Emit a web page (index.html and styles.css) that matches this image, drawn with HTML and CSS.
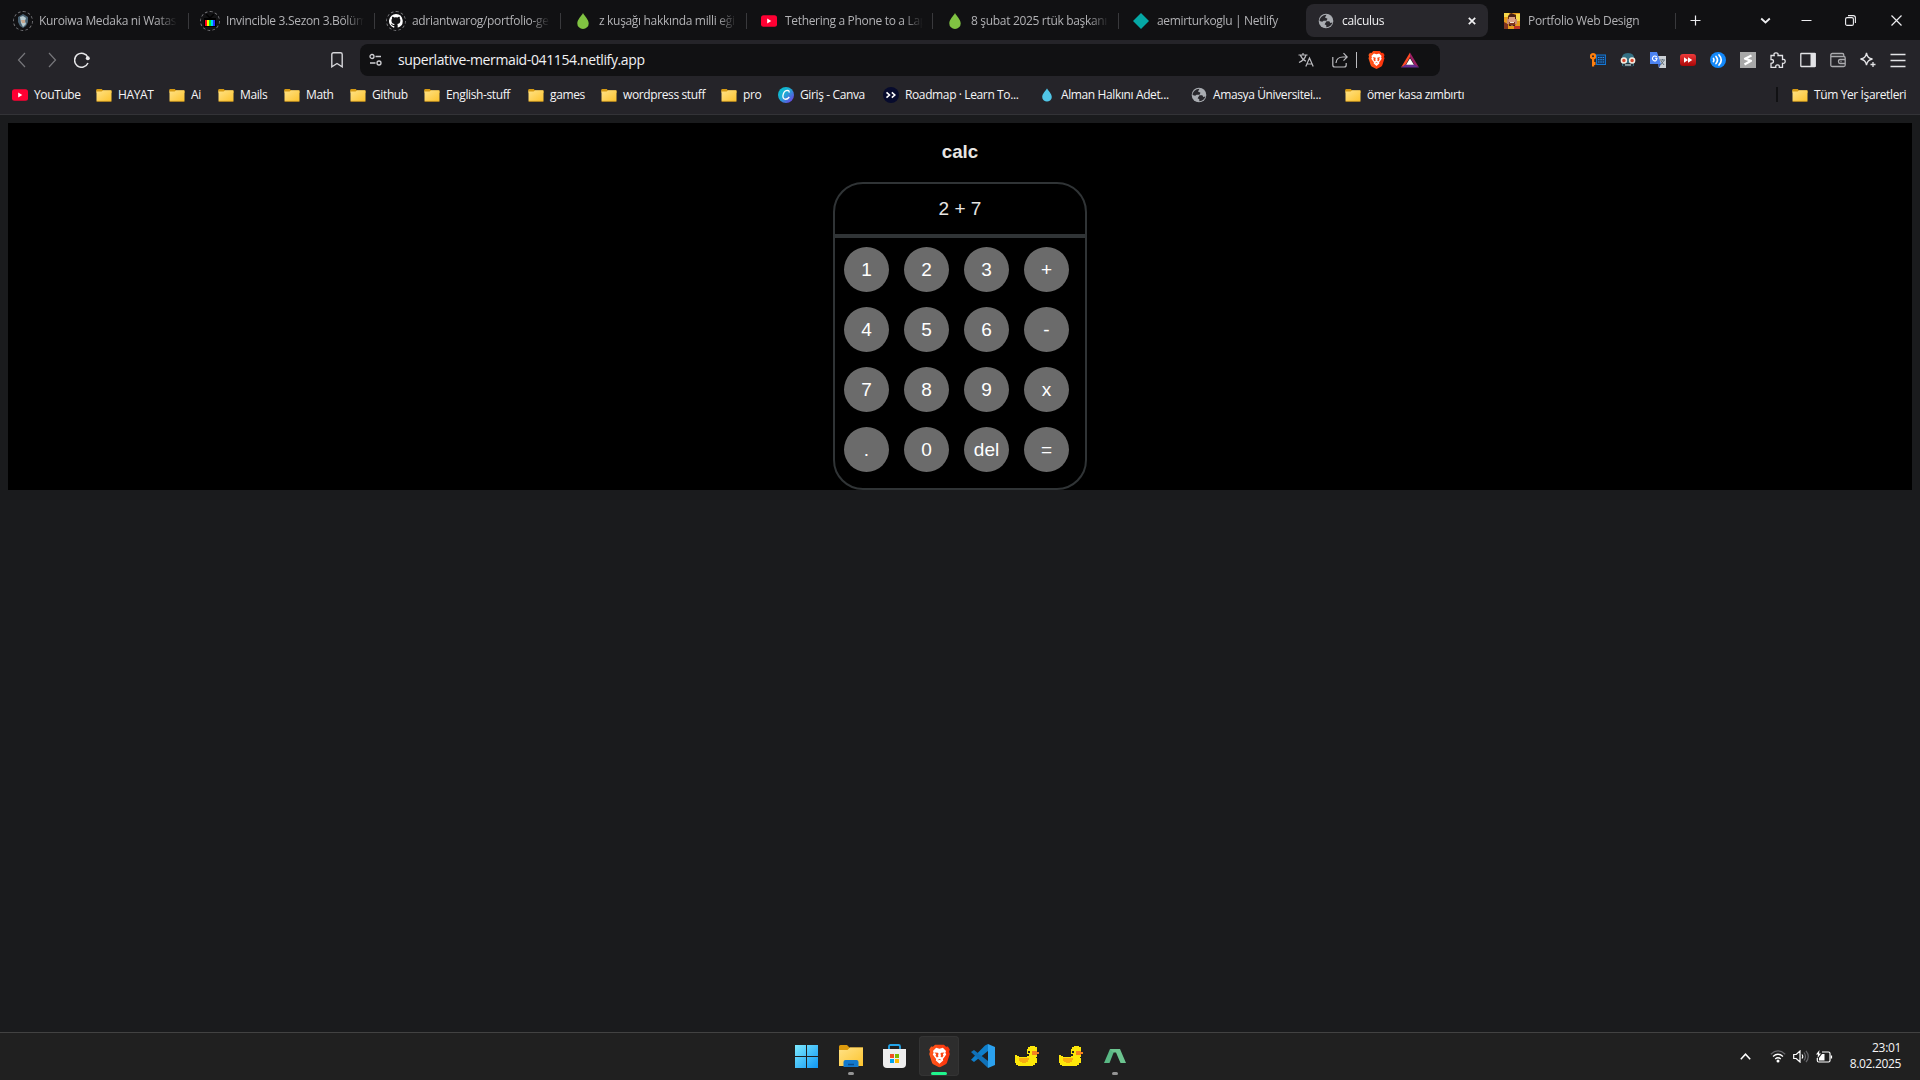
FILE: index.html
```html
<!DOCTYPE html>
<html lang="tr">
<head>
<meta charset="utf-8">
<title>calculus</title>
<link rel="stylesheet" href="styles.css">
</head>
<body>
<svg class="defs" width="0" height="0" aria-hidden="true">
  <defs>
    <linearGradient id="gFolder" x1="0" y1="0" x2="1" y2="1"><stop offset="0" stop-color="#ffe287"/><stop offset="1" stop-color="#fdc42e"/></linearGradient>
    <linearGradient id="gWin" gradientUnits="userSpaceOnUse" x1="0" y1="0" x2="23" y2="23"><stop offset="0" stop-color="#7deaff"/><stop offset="1" stop-color="#0f96f2"/></linearGradient>
    <linearGradient id="gCanva" x1="0" y1="0" x2="1" y2="1"><stop offset="0" stop-color="#00c4cc"/><stop offset=".45" stop-color="#1fa9d4"/><stop offset="1" stop-color="#7d2ae8"/></linearGradient>
    <linearGradient id="gBrave" x1="0" y1="0" x2="1" y2="0"><stop offset="0" stop-color="#ff5a1c"/><stop offset="1" stop-color="#fb2f0a"/></linearGradient>
    <linearGradient id="gRed" x1="0" y1="0" x2="0" y2="1"><stop offset="0" stop-color="#ee3a3a"/><stop offset="1" stop-color="#a90606"/></linearGradient>
    <symbol id="folder" viewBox="0 0 16 16"><path d="M.5 3q0-1 1-1h4l1.500 1.600H15.500V6H.5z" fill="#d69a13"/><rect x=".5" y="3.300" width="15" height="11" rx=".8" fill="url(#gFolder)"/><path d="M.5 3q0-1 1-1h4L7 3.500 5.500 4.500H.5z" fill="#d69a13"/><path d="M.5 14.300h15" stroke="#d9a01a" stroke-width=".8"/></symbol>
    <symbol id="youtube" viewBox="0 0 16 16"><rect y="2.300" width="16" height="11.500" rx="2.500" fill="#ff0033"/><path d="M6.200 5.600v4.800L10.300 8z" fill="#fff"/></symbol>
    <symbol id="drop" viewBox="0 0 16 16"><path d="M8 0C6.600 3 2.300 6.500 2.300 10.400a5.700 5.600 0 0 0 11.400 0C13.700 6.500 9.400 3 8 0z"/></symbol>
    <symbol id="globe" viewBox="0 0 16 16"><circle cx="8" cy="8" r="7.300" fill="#a9acb1"/><path d="M8.500 1.800 7 4.500l2.500 1.200-1 2H5.600l-1.400 1.100-2.600-.9c0-3 3-6 6.900-6.100zM8.500 8.300h2.800l1 1.700 2-.4c-.5 2.500-3 4.800-6 4.700v-2.100l-1.700-1z" fill="#28272c"/></symbol>
    <symbol id="lion" viewBox="0 0 20 22"><path d="M6 0h8l2.200 2.300 1.800-.3 1.800 2.800-.7 2.200.7 2-2.600 8.200q-.4 1.200-1.700 2L10 22l-5.500-2.800q-1.300-.8-1.700-2L.2 9l.7-2-.7-2.200L2 2l1.800.3z" fill="url(#gBrave)"/><path d="m10 4 3.200-.8 3 3-.6 1.800.8 1.600-2.200 3-1 1.200.3 1.600L10 18.300l-3.500-2.900.3-1.600-1-1.200-2.200-3L4.400 8l-.6-1.800 3-3z" fill="#fff"/><path d="m5.200 7.700 3.200.2.700.8-.5 1.800.4 1.300-1.500.7-1.300-1.700.6-1.400zM14.800 7.700l-3.200.2-.7.800.5 1.800-.4 1.300 1.500.7 1.300-1.700-.6-1.400zM7.800 15l2.200-1.200L12.200 15l-2.200-.3z" fill="#fb4816"/></symbol>
    <symbol id="duck" viewBox="0 0 24 20"><path d="M13 1h2V0h5v1h2v10h-1v1h1v5h-2v2h-2v1H3v-1H1v-2H0V9h2v1h2v1h8v-1h2V8h-2V3h1z" fill="#fde70a"/><path d="M17 5h5v1h2v2h-2v1h-5z" fill="#f6821f"/><path d="M13 5h2v2h-2z" fill="#222"/><path d="M4 12h10v2h-1v2h-2v1H7v-1H5v-1H4z" fill="#f8ad10"/></symbol>
  </defs>
</svg>

<header class="browser">
  <nav class="tabs">
    <div class="tab ringed"><span class="fav ring"><svg width="12" height="14" viewBox="0 0 12 14"><path d="M1 3 6 0l5 3v5l-2 4-3 2-3-2-2-4z" fill="#496273"/><path d="M3 3 6 2l3 2-1 3 1 3-3 3-2-4z" fill="#b9cbd0"/><path d="M4 6h4v3H5z" fill="#c7a78d"/></svg></span><span class="title">Kuroiwa Medaka ni Watash</span></div>
    <div class="tab ringed"><span class="fav ring"><svg width="14" height="14" viewBox="0 0 14 14"><path d="m3 0 4 4 4-4" stroke="#000" fill="none" stroke-width="1.500"/><rect x="1" y="4" width="12" height="9" fill="#000"/><path d="M2 6h2v6H2z" fill="#f02"/><path d="M4 6h2v6H4z" fill="#fe0"/><path d="M6 6h2v6H6z" fill="#0e3"/><path d="M8 6h2v6H8z" fill="#0cf"/><path d="M10 6h2v6h-2z" fill="#23f"/></svg></span><span class="title">Invincible 3.Sezon 3.Bölüm</span></div>
    <div class="tab ringed"><span class="fav ring"><svg width="14" height="14" viewBox="0 0 16 16"><path fill="#fff" d="M8 0a8 8 0 0 0-2.500 15.600c.4.100.5-.2.500-.4v-1.500c-2 .4-2.600-.5-2.800-1-.1-.2-.5-.9-.8-1.100-.3-.2-.7-.5 0-.6.600 0 1.100.6 1.200.8.700 1.200 1.900.9 2.300.7.100-.5.300-.9.500-1.100-1.800-.2-3.600-.9-3.600-4 0-.9.300-1.600.8-2.200-.1-.2-.4-1 .1-2.100 0 0 .7-.2 2.200.8a7.400 7.400 0 0 1 4 0c1.500-1 2.200-.8 2.200-.8.500 1.100.2 1.900.1 2.100.5.600.8 1.300.8 2.200 0 3.100-1.900 3.700-3.600 4 .3.200.5.700.5 1.500v2.200c0 .2.100.5.500.4A8 8 0 0 0 8 0"/></svg></span><span class="title">adriantwarog/portfolio-ge</span></div>
    <div class="tab"><svg class="fav green"><use href="#drop"/></svg><span class="title">z kuşağı hakkında milli eği</span></div>
    <div class="tab"><svg class="fav"><use href="#youtube"/></svg><span class="title">Tethering a Phone to a Lap</span></div>
    <div class="tab"><svg class="fav green"><use href="#drop"/></svg><span class="title">8 şubat 2025 rtük başkanı</span></div>
    <div class="tab"><svg class="fav" viewBox="0 0 16 16"><path d="m8 0 8 8-8 8-8-8z" fill="#05a8a5"/></svg><span class="title">aemirturkoglu | Netlify</span></div>
    <div class="tab active"><svg class="fav"><use href="#globe"/></svg><span class="title">calculus</span><svg class="close" viewBox="0 0 8 8"><path d="m.8.8 6.400 6.400m0-6.400L.8 7.200"/></svg></div>
    <div class="tab"><svg class="fav" viewBox="0 0 16 16"><path fill="#e79a1c" d="M0 0h16v16H0z"/><path fill="#f8d84a" d="M0 0h5v4H0zM12 1h4v7h-4z"/><path fill="#4b2014" d="M4 3 7 0l5 2v5l-1 6H5z"/><path fill="#dca184" d="M5 4h6v6l-3 3-3-3z"/><path fill="#813421" d="M5 9h6v3H6zM0 9l4 2v5H0z"/><path fill="#f4e5d1" d="M6 9h4v1H6z"/><path fill="#c98a70" d="M3 6h2v5H3zM11 6h2v5h-2z"/><path fill="#bd3328" d="M10 13h6v3h-6z"/></svg><span class="title">Portfolio Web Design</span></div>
    <div class="winctl">
      <svg viewBox="0 0 11 11"><path d="M5.500.5v10M.5 5.500h10"/></svg>
      <svg viewBox="0 0 11 11"><path d="m1.200 3.500 4.300 4 4.300-4" stroke-width="1.800"/></svg>
      <svg viewBox="0 0 11 11"><path d="M.5 5.500h10" stroke-width="1"/></svg>
      <svg viewBox="0 0 11 11"><rect x=".6" y="2.600" width="7.800" height="7.800" rx="1.500" stroke-width="1.100"/><path d="M3 .6h5.200q2.200 0 2.200 2.200V8" stroke-width="1.100"/></svg>
      <svg viewBox="0 0 11 11"><path d="m.5.5 10 10m0-10-10 10"/></svg>
    </div>
  </nav>

  <div class="toolbar">
    <div class="navbtns">
      <svg class="dim" viewBox="0 0 16 16"><path d="M11 1 4.500 8l6.500 7"/></svg>
      <svg class="dim" viewBox="0 0 16 16"><path d="m5 1 6.500 7L5 15"/></svg>
      <svg viewBox="0 0 16 16"><path d="M14 5.500A7 7 0 1 0 14 11" stroke-width="1.500"/><circle cx="13.800" cy="6.300" r="2" fill="#e6e6e8" stroke="none"/></svg>
    </div>
    <svg class="bookmark" viewBox="0 0 12 16"><path d="M2.500.8h7q1.700 0 1.700 1.700v12.300L6 11.500.8 14.800V2.500Q.8.8 2.500.8z"/></svg>
    <div class="address">
      <svg class="tune" viewBox="0 0 14 14"><circle cx="3" cy="3.500" r="2"/><circle cx="10" cy="10" r="2"/><path d="M6.500 3.500H12M1 10h5.500"/></svg>
      <span class="url">superlative-mermaid-041154.netlify.app</span>
      <div class="addr-icons">
        <svg width="16" height="16" viewBox="0 0 16 16" fill="none" stroke="#bcbcc0" stroke-width="1.200"><path d="M.5 3h9M5 1v2M2.300 3Q4 7.500 8 9.300M8 3Q6.500 8 1 10.500M7.800 14.500 11.500 6l3.700 8.500M9 12h5"/></svg>
        <svg width="16" height="16" viewBox="0 0 16 16" fill="none" stroke="#bcbcc0" stroke-width="1.200"><path d="M.8 5v8q0 2 2 2h9.400q2 0 2-2v-2M4 11Q4.500 5 11 5h4M11.500 1.200 15.200 5l-3.700 3.700"/></svg>
        <i class="bar"></i>
        <svg width="17" height="18"><use href="#lion"/></svg>
        <svg width="18" height="16" viewBox="0 0 18 16"><path d="M9 .5 0 15.500l4.500-2.600L9 5z" fill="#ff4a27"/><path d="m9 .5 9 15-4.500-2.600L9 5z" fill="#9e1f63"/><path d="M0 15.500h18l-4.500-2.900h-9z" fill="#662d91"/><path d="m9 6.200 3.900 6.600H5.100z" fill="#fff"/></svg>
      </div>
    </div>
    <div class="extensions">
      <svg viewBox="0 0 16 16"><circle cx="3" cy="4.300" r="2.100" fill="none" stroke="#ff7f0e" stroke-width="2.200"/><path d="M2 6h2.200v8.500H2zM4 10h1.500v3H4z" fill="#ff7f0e"/><rect x="6.600" y="3" width="9" height="9.500" fill="#15355c" stroke="#1578d6"/><path d="M8 5.500h6.500M8 7.700h6.500M8 10h6.500" stroke="#2d91ee" stroke-dasharray="1.500 .8"/></svg>
      <svg viewBox="0 0 16 16"><path d="M2 8Q1 1 8 1t6 7v6H2z" fill="#347083"/><path d="M3 11h10v4H3z" fill="#26343d"/><path d="M5 12.200h6v1.500H5z" fill="#a5b9bd"/><g fill="#d84830" stroke="#f4eee2" stroke-width="1.500"><circle cx="3.900" cy="8.500" r="2.500"/><circle cx="12.100" cy="8.500" r="2.500"/></g></svg>
      <svg viewBox="0 0 16 16"><path d="M6 4h10v12H9z" fill="#cbd0d5"/><path d="M0 0h7l4 12H0z" fill="#4c83f1"/><path d="m8 12 3 0-2 4z" fill="#3059b7"/><path d="M6.800 4.800Q4.500 3 3 5t.8 3.500T7 6.300H5" fill="none" stroke="#fff" stroke-width="1.100"/><path d="M9.800 8H15M12.500 7v1M10.500 13 14 8.500M11 9l3 4" stroke="#63717c" fill="none"/></svg>
      <svg viewBox="0 0 16 16"><rect y="2" width="16" height="12" rx="3" fill="url(#gRed)"/><path d="M4 5.200 8 8l-4 2.800zM8 5.200 12.300 8 8 10.800z" fill="#fff"/></svg>
      <svg viewBox="0 0 16 16"><circle cx="8" cy="8" r="8" fill="#1389fb"/><path d="M3.500 6.500q1 1.500 0 3M6 4.500q3 3.500 0 7M9 3q4.500 5 0 10" stroke="#fff" stroke-width="1.700" fill="none" stroke-linecap="round"/></svg>
      <svg viewBox="0 0 16 16"><path d="M0 0h16v16H0z" fill="#a8a8a8"/><path d="M11.500 3.500 5 6.800l6 2-6.500 3.700" fill="none" stroke="#fff" stroke-width="2.200" stroke-linejoin="round"/></svg>
      <svg class="line" viewBox="0 0 16 16"><path d="M1 3.500h3.200Q3.500.8 6 .8t2 2.700h4.500v4q2.700-.7 2.700 1.800t-2.700 2v4H9.300q.3-2.500-1.800-2.500t-1.700 2.500H1v-4q2.500 0 2.500-2T1 7.500z"/></svg>
      <svg class="line" viewBox="0 0 16 16"><rect x=".8" y="1.500" width="14.400" height="13" rx=".5"/><path d="M10.500 1h5v14h-5z" fill="#e3e3e6" stroke="none"/></svg>
      <svg class="line dim2" viewBox="0 0 16 16"><path d="M.8 4.500V3q0-1.500 1.500-1.500h10q1.500 0 1.500 1.500v1.500M.8 4.500h12.900q1.500 0 1.500 1.500v7q0 1.500-1.500 1.500H2.300Q.8 14.500.8 13zM15 7.500h-5q-1.500 0-1.500 2t1.500 2h5M10.500 9.500h1"/></svg>
      <svg class="line" viewBox="0 0 16 16"><path d="M6.500.8q.7 5.500 6 6.200-5.300.8-6 6.200Q5.800 7.800.5 7q5.300-.7 6-6.200zM13 10v5M10.500 12.500h5"/></svg>
      <svg class="line" viewBox="0 0 16 16"><path d="M.5 2.500h15M.5 8.500h15M.5 14.500h15"/></svg>
    </div>
  </div>

  <div class="bookmarks">
    <a><svg><use href="#youtube"/></svg>YouTube</a>
    <a><svg><use href="#folder"/></svg>HAYAT</a>
    <a><svg><use href="#folder"/></svg>Ai</a>
    <a><svg><use href="#folder"/></svg>Mails</a>
    <a><svg><use href="#folder"/></svg>Math</a>
    <a><svg><use href="#folder"/></svg>Github</a>
    <a><svg><use href="#folder"/></svg>English-stuff</a>
    <a><svg><use href="#folder"/></svg>games</a>
    <a><svg><use href="#folder"/></svg>wordpress stuff</a>
    <a><svg><use href="#folder"/></svg>pro</a>
    <a><svg viewBox="0 0 16 16"><circle cx="8" cy="8" r="8" fill="url(#gCanva)"/><path d="M11 5.500q.5-2-1.500-2.200Q6.500 3.300 5.300 7t1 5q2.700 1 5-2" fill="none" stroke="#fff" stroke-width="1.300"/></svg>Giriş - Canva</a>
    <a><svg viewBox="0 0 16 16"><circle cx="8" cy="8" r="8" fill="#070b2d"/><path d="m3.500 5.300 3 2.700-3 2.700M8.800 5.300l3 2.700-3 2.700" fill="none" stroke="#fff" stroke-width="1.600"/></svg>Roadmap · Learn To...</a>
    <a><svg class="blue" viewBox="-1.500 -1.500 19 19"><use href="#drop" width="16" height="16"/></svg>Alman Halkını Adet...</a>
    <a><svg><use href="#globe"/></svg>Amasya Üniversitei...</a>
    <a><svg><use href="#folder"/></svg>ömer kasa zımbırtı</a>
    <i class="sep"></i>
    <a><svg><use href="#folder"/></svg>Tüm Yer İşaretleri</a>
  </div>
</header>

<main class="page">
  <section class="app">
    <h3>calc</h3>
    <div class="calculator">
      <div class="display">2 + 7</div>
      <div class="keys">
        <button>1</button><button>2</button><button>3</button><button>+</button>
        <button>4</button><button>5</button><button>6</button><button>-</button>
        <button>7</button><button>8</button><button>9</button><button>x</button>
        <button>.</button><button>0</button><button>del</button><button>=</button>
      </div>
    </div>
  </section>
</main>

<footer class="taskbar">
  <div class="apps">
    <div class="app-icon"><svg width="23" height="23" viewBox="0 0 23 23" fill="url(#gWin)"><path d="M0 0h11v11H0zM12 0h11v11H12zM0 12h11v11H0zM12 12h11v11H12z"/></svg></div>
    <div class="app-icon running"><svg width="24" height="22" viewBox="0 0 24 22"><path d="M0 1.500Q0 0 1.500 0H8l2.500 2.500H24V8H0z" fill="#dc9a0d"/><path d="M0 5h8.500l2.500-2.500h13V21H0z" fill="url(#gFolder)"/><path d="M4.500 22v-5q0-2 2-2h11q2 0 2 2v5z" fill="#1379cc"/><path d="M9 19.500h6" stroke="#0b4c8d" stroke-width="1.500"/></svg></div>
    <div class="app-icon"><svg width="23" height="24" viewBox="0 0 23 24"><path d="M6 6V2.500Q6 1 7.500 1h8Q17 1 17 2.500V6" fill="none" stroke="#23a5ea" stroke-width="1.800"/><path d="M0 5h23v15q0 4-4 4H4q-4 0-4-4z" fill="#eee"/><path d="M7 10h4v4H7z" fill="#f25022"/><path d="M12 10h4v4h-4z" fill="#7fba00"/><path d="M7 15h4v4H7z" fill="#00a4ef"/><path d="M12 15h4v4h-4z" fill="#ffb900"/></svg></div>
    <div class="app-icon current"><svg width="21" height="24" viewBox="0 0 20 22"><use href="#lion" width="20" height="22"/></svg></div>
    <div class="app-icon"><svg width="24" height="24" viewBox="0 0 24 24"><path d="M17 0v7L3 18l-3-2.200L14 1.500z" fill="#0f7fcb"/><path d="m0 8 3-2 14 11v7z" fill="#1071b8"/><path d="m17 0 7 3v18l-7 3z" fill="#2ba1ee"/></svg></div>
    <div class="app-icon"><svg width="24" height="20"><use href="#duck"/></svg></div>
    <div class="app-icon"><svg width="24" height="20"><use href="#duck"/></svg></div>
    <div class="app-icon running"><svg width="22" height="14" viewBox="0 0 22 14"><path d="M6 0h5L5.500 14H0z" fill="#59b884"/><path d="M6 0h10l6 14h-5.500L12 3.500H9.500z" fill="#6cc48f"/></svg></div>
  </div>
  <div class="tray">
    <svg width="11" height="7" viewBox="0 0 11 7"><path d="M.8 6.200 5.500 1.200l4.700 5" stroke-width="1.500"/></svg>
    <svg width="16" height="13" viewBox="0 0 16 13"><path d="M.8 4.200q7.200-6.500 14.400 0" stroke="#66666a"/><path d="M3 6.500q5-4.500 10 0M5.200 9q2.800-2.500 5.600 0"/><circle cx="8" cy="11" r="1.500" fill="#fff" stroke="none"/></svg>
    <svg width="16" height="13" viewBox="0 0 16 13"><path d="M.7 4.500h2.500L7 1v11L3.200 8.500H.7zM9 4.500q1.500 2 0 4"/><path d="M11 2.500q3 4 0 8M13 .8q4.500 5.700 0 11.400" stroke="#66666a"/></svg>
    <svg width="17" height="13" viewBox="0 0 17 13"><path d="M6 2h6.500Q14 2 14 3.500v7q0 1.500-1.500 1.500H2.800Q1.300 12 1.300 10.500V8M15.500 5.500v3"/><path d="M3 10.500V8l3-4h2.500v6.500zM3.500 0 0 4.500h2L1.500 8 5 3.500H3z" fill="#fff" stroke="none"/></svg>
    <div class="clock"><span>23:01</span><span>8.02.2025</span></div>
  </div>
</footer>
</body>
</html>
```
FILE: styles.css
```css
* { box-sizing: border-box; }

body {
  margin: 0;
  height: 100vh;
  display: flex;
  flex-direction: column;
  overflow: hidden;
  background: #1a1b1d;
  color: #f5f5f6;
  font-family: "Open Sans", "Noto Sans", sans-serif;
  font-size: 12px;
}
svg { display: block; flex: none; }
.defs { position: absolute; }

/* Browser chrome */
.browser { height: 115px; flex: none; background: #252429; border-bottom: 1px solid #333337; }

.tabs { height: 40px; display: flex; padding-left: 2px; background: #111113; }
.tab {
  width: 186px;
  height: 33px;
  margin-top: 4px;
  flex: none;
  display: flex;
  align-items: center;
  padding-left: 14px;
  gap: 8px;
  color: #b2b2b5;
  background: linear-gradient(#39393c, #39393c) right center / 1px 16px no-repeat;
}
.tabs > :first-child { width: 187px; }
.tabs > :nth-child(n + 2) { position: static; }
.tab:nth-child(7) { width: 185px; background: none; }
.tab.active {
  width: 182px;
  margin-left: 2px;
  margin-right: 2px;
  padding-left: 12px;
  border-radius: 8px;
  background: #28272c;
  color: #f0f0f2;
}
.tab .fav { width: 16px; height: 16px; flex: none; }
.tab.ringed { padding-left: 11px; gap: 6px; }
.tab .fav.ring {
  width: 20px;
  height: 20px;
  display: grid;
  place-items: center;
  border: 1px dashed #77777b;
  border-radius: 50%;
}
.green { fill: #80c342; }
.blue { fill: #50c5e6; }
.title {
  width: 138px;
  overflow: hidden;
  white-space: nowrap;
  letter-spacing: -.32px;
  mask-image: linear-gradient(90deg, #000 118px, transparent 138px);
}
.active .title { width: 118px; }
.close { width: 8px; height: 8px; stroke: #f0f0f2; stroke-width: 1.700; }

.winctl {
  display: grid;
  grid-template-columns: 38px 73px 39px 46px 46px;
  flex: 1;
  align-items: center;
  justify-items: center;
}
.winctl svg { width: 11px; height: 11px; fill: none; stroke: #ededf0; stroke-width: 1.200; }
.winctl svg:nth-child(2) { margin-left: 30px; }
.winctl svg:nth-child(n + 4) { margin-left: 3px; }

.toolbar { height: 40px; display: flex; align-items: center; }
.navbtns { width: 331px; padding-left: 14px; display: flex; gap: 14px; }
.navbtns svg { width: 16px; height: 16px; fill: none; stroke: #e6e6e8; stroke-width: 1.200; }
.navbtns .dim { stroke: #77777b; }
.bookmark { width: 12px; height: 16px; margin-right: 17px; fill: none; stroke: #d6d6da; stroke-width: 1.400; }
.address {
  width: 1080px;
  height: 32px;
  display: flex;
  align-items: center;
  padding: 0 21px 0 9px;
  border-radius: 8px;
  background: #111113;
}
.tune { width: 14px; height: 14px; margin-right: 15px; fill: none; stroke: #d0d0d4; stroke-width: 1.300; }
.url { flex: 1; padding-bottom: 1px; font-size: 14px; letter-spacing: -.38px; color: #f2f2f4; }
.addr-icons { display: flex; align-items: center; }
.addr-icons svg:nth-child(1) { margin-right: 18px; }
.addr-icons .bar { width: 1px; height: 16px; margin: 0 11px 0 8px; background: #bcbcc0; }
.addr-icons svg:nth-child(4) { margin-right: 16px; }
.extensions { display: flex; gap: 14px; margin-left: auto; margin-right: 14px; }
.extensions svg { width: 16px; height: 16px; }
.line { fill: none; stroke: #e3e3e6; stroke-width: 1.300; }
.line.dim2 { stroke: #aaaaae; }

.bookmarks {
  height: 30px;
  display: grid;
  grid-template-columns: 84px 73px 49px 66px 66px 74px 104px 73px 120px 57px 105px 156px 152px 154px 431px 16px 114px;
  align-items: center;
  padding-left: 12px;
  padding-bottom: 1px;
  letter-spacing: -.38px;
}
.bookmarks a { display: flex; align-items: center; gap: 6px; white-space: nowrap; }
.bookmarks svg { width: 16px; height: 16px; }
.bookmarks .sep { width: 2px; height: 15px; background: #111113; }

/* Web page */
.page { flex: 1; padding: 8px; }
.app {
  height: 367px;
  display: flex;
  flex-direction: column;
  align-items: center;
  background: #000;
  color: #e8e6e3;
  font-family: "Liberation Sans", Arial, sans-serif;
  font-size: 19px;
}
h3 { margin: 18px 0 19px; font-size: 18.720px; line-height: 22px; }
.calculator { width: 254px; height: 308px; border: 2px solid #303436; border-radius: 30px; }
.display { height: 54px; line-height: 49px; text-align: center; border-bottom: 4px solid #303436; }
.keys { display: grid; grid-template-columns: repeat(4, 45px); gap: 15px; padding: 9px; }
.keys button {
  width: 45px;
  height: 45px;
  padding: 0;
  border: 0;
  border-radius: 50%;
  background: #6b6b6b;
  color: #fff;
  font: inherit;
}

/* Taskbar */
.taskbar {
  height: 48px;
  flex: none;
  display: grid;
  grid-template-columns: 1fr 352px 1fr;
  border-top: 1px solid #424242;
  background: #202020;
}
.apps { grid-column: 2; display: flex; gap: 4px; padding: 3px 0 0 3px; }
.app-icon { position: relative; width: 40px; height: 40px; flex: none; display: grid; place-items: center; border-radius: 4px; }
.app-icon:nth-child(1), .app-icon:nth-child(3) { padding-right: 1px; }
.current { background: #2d2d2d; box-shadow: inset 0 0 0 1px #343434; }
.running::after, .current::after {
  content: "";
  position: absolute;
  left: 17px;
  bottom: 1px;
  width: 6px;
  height: 3px;
  border-radius: 2px;
  background: #949494;
}
.current::after { left: 12px; width: 16px; background: #20f58d; }
.tray { display: flex; align-items: center; justify-content: flex-end; padding-right: 19px; }
.tray svg { fill: none; stroke: #fff; stroke-width: 1.200; }
.tray svg:nth-child(1) { margin-right: 19px; }
.tray svg:nth-child(2), .tray svg:nth-child(3) { margin-right: 7px; }
.clock { width: 68px; padding-bottom: 1px; display: flex; flex-direction: column; align-items: flex-end; line-height: 16px; letter-spacing: -.34px; }
```
